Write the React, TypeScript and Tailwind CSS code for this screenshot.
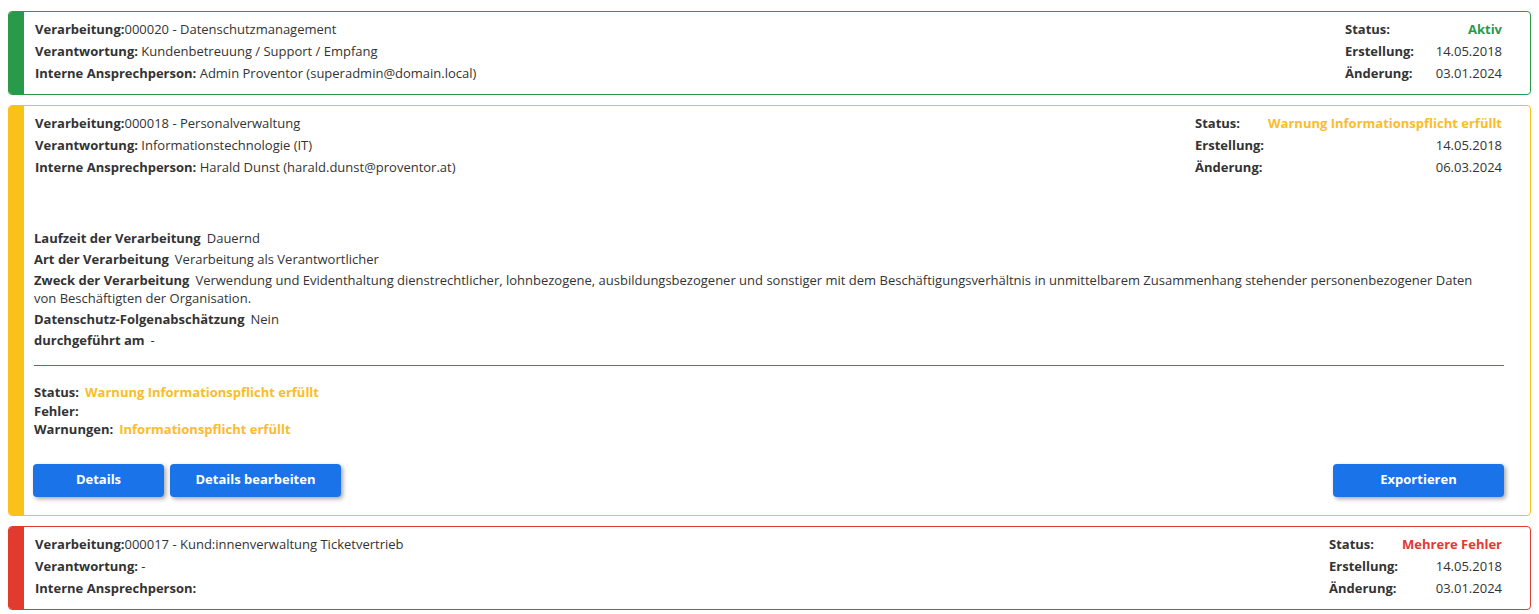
import React from "react";

type Meta = { status: string; statusColor: string; erstellung: string; aenderung: string };

function RightMeta({ m }: { m: Meta }) {
  return (
    <div className="grid grid-cols-[auto_1fr] gap-x-1 min-w-[157px] leading-[22px] self-start mr-[2px]">
      <span className="font-bold text-[#333]">Status:</span>
      <span className={`font-bold text-right ${m.statusColor}`}>{m.status}</span>
      <span className="font-bold text-[#333]">Erstellung:</span>
      <span className="text-right">{m.erstellung}</span>
      <span className="font-bold text-[#333]">Änderung:</span>
      <span className="text-right">{m.aenderung}</span>
    </div>
  );
}

function Header({ nr, verantwortung, person, m }: { nr: string; verantwortung: string; person: string; m: Meta }) {
  return (
    <div className="flex justify-between">
      <div className="leading-[22px] pl-px">
        <div>
          <span className="font-bold">Verarbeitung:</span>
          {nr}
        </div>
        <div>
          <span className="font-bold">Verantwortung:</span> {verantwortung}
        </div>
        <div>
          <span className="font-bold">Interne Ansprechperson:</span> {person}
        </div>
      </div>
      <RightMeta m={m} />
    </div>
  );
}

function Card({ color, border, children }: { color: string; border: string; children: React.ReactNode }) {
  return (
    <div className={`flex border rounded-[4px] overflow-hidden bg-white ${border}`}>
      <div className={`w-[15px] shrink-0 ${color}`} />
      <div className="flex-1 pl-[10px] pr-[26px] pt-[6px] pb-[10px]">{children}</div>
    </div>
  );
}

function Btn({ label, w }: { label: string; w: string }) {
  return (
    <button
      className={`${w} h-[33px] rounded-[4px] bg-[#1a73e8] text-white font-bold text-[13px] shadow-[2px_2px_4px_rgba(0,0,0,0.35)]`}
    >
      {label}
    </button>
  );
}

function L({ children }: { children: React.ReactNode }) {
  return <span className="font-bold mr-[6px]">{children}</span>;
}

export default function App() {
  return (
    <div
      className="bg-white px-[8px] pt-[11px] flex flex-col gap-[10px] text-[13px] text-[#333]"
      style={{ fontFamily: '"Open Sans", "Noto Sans", sans-serif' }}
    >
      <Card color="bg-[#2a9a4a]" border="border-[#2a9a4a]">
        <Header
          nr="000020 - Datenschutzmanagement"
          verantwortung="Kundenbetreuung / Support / Empfang"
          person="Admin Proventor (superadmin@domain.local)"
          m={{ status: "Aktiv", statusColor: "text-[#2a9a4a]", erstellung: "14.05.2018", aenderung: "03.01.2024" }}
        />
      </Card>

      <Card color="bg-[#fbc11b]" border="border-[#fbc11b]">
        <Header
          nr="000018 - Personalverwaltung"
          verantwortung="Informationstechnologie (IT)"
          person="Harald Dunst (harald.dunst@proventor.at)"
          m={{
            status: "Warnung Informationspflicht erfüllt",
            statusColor: "text-[#fbbc2c]",
            erstellung: "14.05.2018",
            aenderung: "06.03.2024",
          }}
        />
        <div className="mt-[51px] leading-[18px] flex flex-col gap-[3px] pr-[16px]">
          <div>
            <L>Laufzeit der Verarbeitung</L>Dauernd
          </div>
          <div>
            <L>Art der Verarbeitung</L>Verarbeitung als Verantwortlicher
          </div>
          <div>
            <L>Zweck der Verarbeitung</L>Verwendung und Evidenthaltung dienstrechtlicher, lohnbezogene,
            ausbildungsbezogener und sonstiger mit dem Beschäftigungsverhältnis in unmittelbarem
            Zusammenhang stehender personenbezogener Daten von Beschäftigten der Organisation.
          </div>
          <div>
            <L>Datenschutz-Folgenabschätzung</L>Nein
          </div>
          <div>
            <L>durchgeführt am</L>-
          </div>
        </div>
        <div className="mt-[16px] h-[1px] bg-[#e13a2f]" />
        <div className="mt-[17px] leading-[18.5px]">
          <div>
            <L>Status:</L>
            <span className="font-bold text-[#fbbc2c]">Warnung Informationspflicht erfüllt</span>
          </div>
          <div>
            <span className="font-bold">Fehler:</span>
          </div>
          <div>
            <L>Warnungen:</L>
            <span className="font-bold text-[#fbbc2c]">Informationspflicht erfüllt</span>
          </div>
        </div>
        <div className="mt-[25px] mb-[8px] flex justify-between">
          <div className="flex gap-[6px] -ml-px">
            <Btn label="Details" w="w-[131px]" />
            <Btn label="Details bearbeiten" w="w-[171px]" />
          </div>
          <Btn label="Exportieren" w="w-[171px]" />
        </div>
      </Card>

      <Card color="bg-[#e13a2f]" border="border-[#e13a2f]">
        <Header
          nr="000017 - Kund:innenverwaltung Ticketvertrieb"
          verantwortung="-"
          person=""
          m={{ status: "Mehrere Fehler", statusColor: "text-[#e13a2f]", erstellung: "14.05.2018", aenderung: "03.01.2024" }}
        />
      </Card>
    </div>
  );
}
